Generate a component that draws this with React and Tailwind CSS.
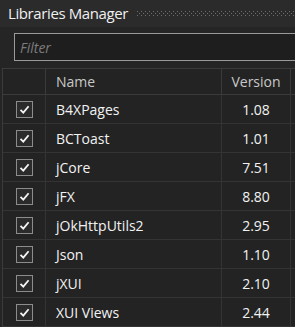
const libs = [
  ["B4XPages", "1.08"],
  ["BCToast", "1.01"],
  ["jCore", "7.51"],
  ["jFX", "8.80"],
  ["jOkHttpUtils2", "2.95"],
  ["Json", "1.10"],
  ["jXUI", "2.10"],
  ["XUI Views", "2.44"],
];

function Grip() {
  return (
    <svg className="flex-1 h-[6px] ml-[9px]" aria-hidden="true">
      <defs>
        <pattern id="grip" width="4" height="4" patternUnits="userSpaceOnUse">
          <rect x="0" y="0" width="1" height="1" fill="#6e6e6e" />
          <rect x="2" y="2" width="1" height="1" fill="#6e6e6e" />
        </pattern>
      </defs>
      <rect width="100%" height="100%" fill="url(#grip)" />
    </svg>
  );
}

function Check() {
  return (
    <div className="w-[17px] h-[17px] border border-[#8c8c8c] bg-[#2b2b2b] flex items-center justify-center">
      <svg width="11" height="11" viewBox="0 0 11 11">
        <path d="M1.5 5.8 L4.3 8.6 L9.6 2.2" fill="none" stroke="#f4f4f4" strokeWidth="1.8" />
      </svg>
    </div>
  );
}

export default function App() {
  return (
    <div className="w-[295px] h-[327px] overflow-hidden bg-[#252526] font-['Open_Sans',sans-serif]">
      {/* title bar */}
      <div className="h-[27px] flex items-center pl-[8px] bg-[#2b2b2b]">
        <span className="text-[15px] text-[#f0f0f0] leading-none tracking-[-0.4px]">Libraries Manager</span>
        <Grip />
      </div>

      {/* filter */}
      <div className="pt-[6px] pl-[14px]">
        <div className="h-[28px] w-[300px] border border-[#9a9a9a] bg-[#1e1e1e] flex items-center pl-[5px]">
          <span className="text-[14px] italic text-[#7c7c7c]">Filter</span>
        </div>
      </div>

      {/* grid */}
      <div className="mt-[7px] ml-[2px] border-l border-t border-[#3b3b3b] bg-[#232323]">
        <div className="grid grid-cols-[43px_176px_69px_1fr] h-[26px] border-b border-[#3b3b3b] text-[14px] text-[#c8c8c8]">
          <div className="border-r border-[#3b3b3b]" />
          <div className="border-r border-[#3b3b3b] flex items-center pl-[10px]">Name</div>
          <div className="border-r border-[#3b3b3b] flex items-center justify-center">Version</div>
          <div />
        </div>
        {libs.map(([name, version]) => (
          <div
            key={name}
            className="grid grid-cols-[43px_176px_69px_1fr] h-[29px] border-b border-[#343434] text-[14px] text-[#f2f2f2]"
          >
            <div className="border-r border-[#343434] flex items-center justify-center">
              <Check />
            </div>
            <div className="border-r border-[#343434] flex items-center pl-[10px]">{name}</div>
            <div className="border-r border-[#343434] flex items-center justify-center">{version}</div>
            <div />
          </div>
        ))}
      </div>
    </div>
  );
}
